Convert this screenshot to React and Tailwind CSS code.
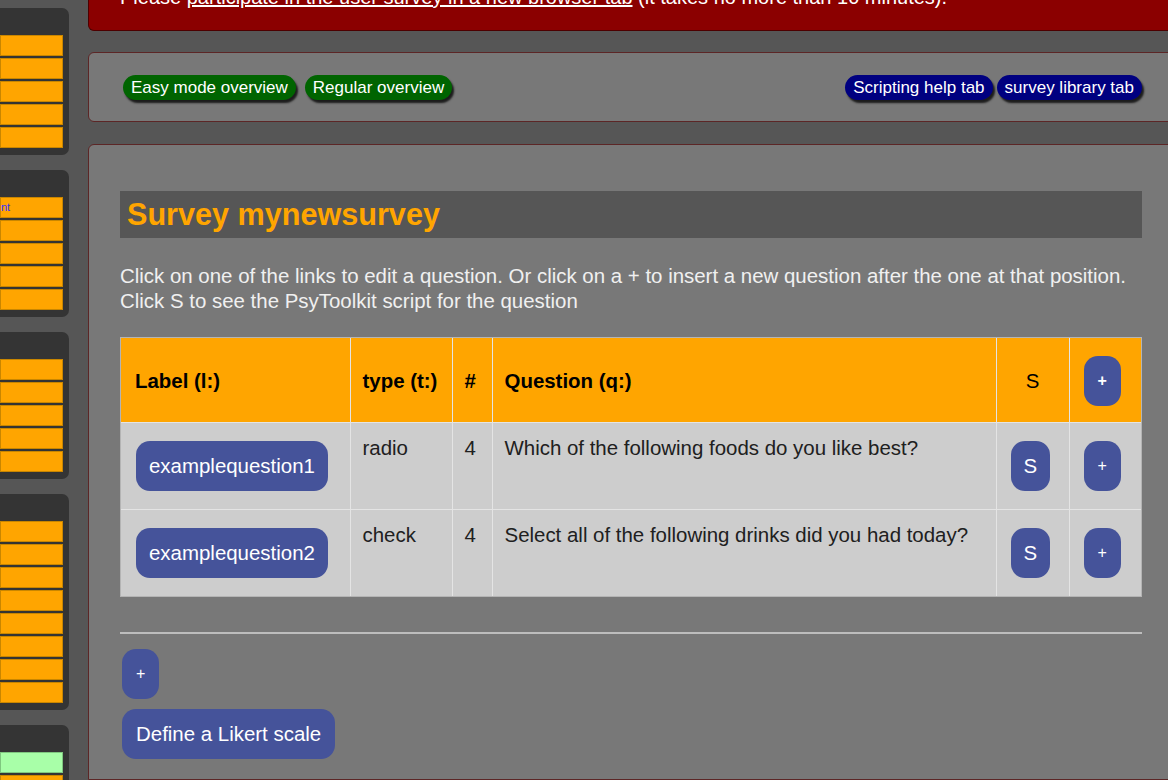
import React from "react";

const sideBoxes = [
  { items: ["", "", "", "", ""] },
  { items: ["nt", "", "", "", ""] },
  { items: ["", "", "", "", ""] },
  { items: ["", "", "", "", "", "", "", ""] },
  { items: ["green", "", ""] },
];

const rows = [
  {
    label: "examplequestion1",
    type: "radio",
    n: "4",
    q: "Which of the following foods do you like best?",
  },
  {
    label: "examplequestion2",
    type: "check",
    n: "4",
    q: "Select all of the following drinks did you had today?",
  },
];

const BlueBtn = ({ children, className = "" }) => (
  <button
    className={`h-[50px] rounded-[14px] bg-[#45539a] text-white leading-none ${className}`}
  >
    {children}
  </button>
);

const Pill = ({ children, color, className = "" }) => (
  <button
    className={`h-[25px] rounded-full px-[8px] text-[17px] leading-none text-white shadow-[2px_3px_2px_#1c1c1c] ${color} ${className}`}
  >
    {children}
  </button>
);

export default function App() {
  return (
    <div className="w-[1168px] h-[780px] overflow-hidden bg-[#565656] flex font-['Liberation_Sans',Arial,sans-serif]">
      {/* ============ SIDEBAR ============ */}
      <aside className="w-[69px] shrink-0 flex flex-col gap-[15px] pt-[8px]">
        {sideBoxes.map((box, i) => (
          <div
            key={i}
            className="bg-[#343434] rounded-r-[7px] pt-[27px] pb-[7px] pr-[6px] flex flex-col gap-[2px]"
          >
            {box.items.map((it, j) => (
              <div
                key={j}
                className={`h-[21px] border ${
                  it === "green"
                    ? "bg-[#a8ffa8] border-[#7fc77f]"
                    : "bg-[#ffa500] border-[#c98600]"
                } text-[11px] leading-[19px] text-[#3434ff]`}
              >
                {it === "green" ? "" : it}
              </div>
            ))}
          </div>
        ))}
      </aside>

      {/* ============ MAIN COLUMN ============ */}
      <main className="ml-[19px] w-[1086px] shrink-0 flex flex-col">
        {/* banner, scrolled partly out of view */}
        <div className="h-[31px] bg-[#8b0000] border border-t-0 border-[#4d0000] rounded-bl-[6px] pl-[31px] text-white text-[20px] leading-[24px] whitespace-nowrap">
          <p className="-mt-[15px]">
            Please <span className="underline">participate in the user survey in a new browser tab</span> (it takes no more than 10 minutes).
          </p>
        </div>

        {/* nav panel */}
        <div className="mt-[21px] h-[70px] bg-[#787878] border border-[#5c2626] rounded-[6px] flex items-center justify-between pl-[34px] pr-[31px]">
          <div className="flex">
            <Pill color="bg-[#006400]">Easy mode overview</Pill>
            <Pill color="bg-[#006400]" className="ml-[9px]">
              Regular overview
            </Pill>
          </div>
          <div className="flex">
            <Pill color="bg-[#000080]">Scripting help tab</Pill>
            <Pill color="bg-[#000080]" className="ml-[4px]">
              survey library tab
            </Pill>
          </div>
        </div>

        {/* survey panel */}
        <div className="mt-[22px] flex-1 bg-[#787878] border border-[#5c2626] rounded-tl-[6px] pt-[46px] pl-[31px] pr-[31px]">
          <div className="h-[47px] bg-[#565656] flex items-center pl-[7px]">
            <h1 className="text-[30.6px] font-bold text-[#ffa500] leading-none">
              Survey mynewsurvey
            </h1>
          </div>

          <p className="mt-[25px] text-[20.45px] leading-[25px] text-[#f0f0f0]">
            Click on one of the links to edit a question. Or click on a + to
            insert a new question after the one at that position.
            <br />
            Click S to see the PsyToolkit script for the question
          </p>

          <div className="mt-[24px] w-[1022px] border border-[#b4b4b4]">
            <table className="w-[1020px] table-fixed border-collapse text-[20.45px] leading-[23px]">
              <colgroup>
                <col className="w-[229px]" />
                <col className="w-[102px]" />
                <col className="w-[40px]" />
                <col className="w-[504px]" />
                <col className="w-[73px]" />
                <col className="w-[72px]" />
              </colgroup>
              <thead>
                <tr className="bg-[#ffa500] text-black">
                  <th className="border-r border-b border-[#e4e4e4] px-3 pl-[14px] text-left font-bold">
                    Label (l:)
                  </th>
                  <th className="border-r border-b border-[#e4e4e4] px-3 text-left font-bold">
                    type (t:)
                  </th>
                  <th className="border-r border-b border-[#e4e4e4] px-3 text-left font-bold">
                    #
                  </th>
                  <th className="border-r border-b border-[#e4e4e4] px-3 text-left font-bold">
                    Question (q:)
                  </th>
                  <th className="border-r border-b border-[#e4e4e4] px-3 text-center font-normal">
                    S
                  </th>
                  <th className="border-b border-[#e4e4e4] px-3 pt-[12px] pb-[11px] text-left">
                    <BlueBtn className="mx-[2px] mt-[6px] mb-[5px] px-[14px] text-[16px]">
                      +
                    </BlueBtn>
                  </th>
                </tr>
              </thead>
              <tbody className="bg-[#cdcdcd] text-[#202020]">
                {rows.map((r, i) => {
                  const b = i === rows.length - 1 ? "" : "border-b";
                  return (
                    <tr key={i}>
                      <td className={`border-r ${b} border-[#e4e4e4] p-3 align-top`}>
                        <BlueBtn className="mx-[3px] my-[6px] px-[13px] text-[20.45px]">
                          {r.label}
                        </BlueBtn>
                      </td>
                      <td className={`border-r ${b} border-[#e4e4e4] p-3 pt-[13px] align-top`}>
                        {r.type}
                      </td>
                      <td className={`border-r ${b} border-[#e4e4e4] p-3 pt-[13px] align-top`}>
                        {r.n}
                      </td>
                      <td className={`border-r ${b} border-[#e4e4e4] p-3 pt-[13px] align-top`}>
                        {r.q}
                      </td>
                      <td className={`border-r ${b} border-[#e4e4e4] p-3 align-top`}>
                        <BlueBtn className="mx-[2px] my-[6px] px-[13px] text-[20.45px]">S</BlueBtn>
                      </td>
                      <td className={`${b} border-[#e4e4e4] p-3 align-top`}>
                        <BlueBtn className="mx-[2px] my-[6px] px-[14px] text-[16px]">+</BlueBtn>
                      </td>
                    </tr>
                  );
                })}
              </tbody>
            </table>
          </div>

          <div className="mt-[35px] h-[2px] w-[1022px] bg-[#bdbdbd]" />

          <div className="mt-[15px] flex flex-col items-start gap-[10px] pl-[2px]">
            <BlueBtn className="px-[14px] text-[16px]">+</BlueBtn>
            <BlueBtn className="px-[14px] text-[20.45px]">Define a Likert scale</BlueBtn>
          </div>
        </div>
      </main>
    </div>
  );
}
